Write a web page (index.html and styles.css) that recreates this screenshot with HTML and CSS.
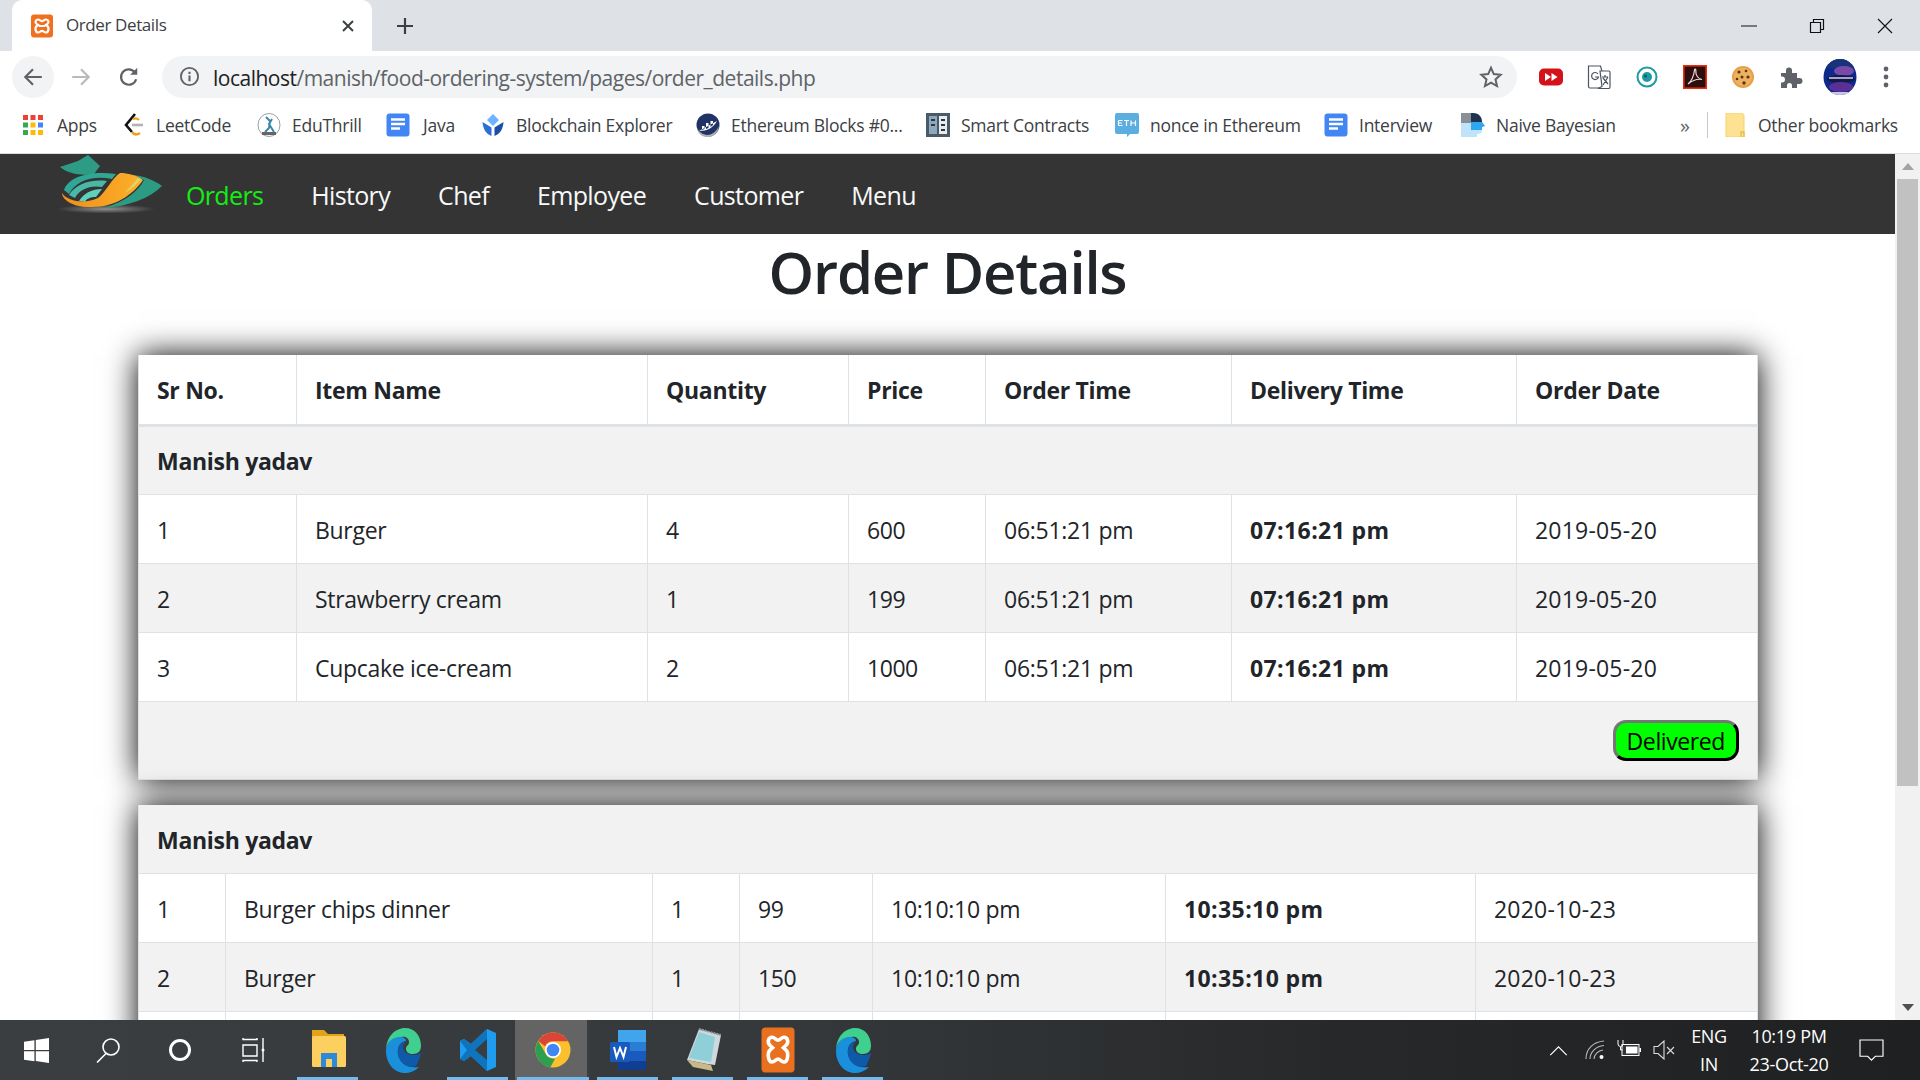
FILE: index.html
```html
<!DOCTYPE html>
<html lang="en">
<head>
<meta charset="utf-8">
<title>Order Details</title>
<link rel="stylesheet" href="styles.css">
</head>
<body>
<svg class="defs" width="0" height="0">
  <defs>
    <symbol id="xampp" viewBox="0 0 24 24">
      <rect x="1" y="0.5" width="22" height="23" rx="3" fill="#f0701f"/>
      <path d="M8 5.500c-2.600 0-3.400 3.200-1.200 4.600l1.600 1-1.600.9C4.600 13.400 5.400 18.500 8 18.500c1.800 0 2.600-1.600 4-1.600s2.200 1.600 4 1.600c2.600 0 3.400-5.100 1.200-6.500l-1.600-.9 1.600-1c2.200-1.400 1.400-4.600-1.200-4.600-1.800 0-2.600 1.600-4 1.600S9.800 5.500 8 5.500z" fill="none" stroke="#fff" stroke-width="2.200"/>
      <path d="M9 12h6" stroke="#fff" stroke-width="2"/>
    </symbol>
    <symbol id="doc" viewBox="0 0 24 24">
      <rect x="0.500" y="0.500" width="23" height="23" rx="3" fill="#4285f4"/>
      <path d="M5 6.500h14M5 11h14M5 15.500h9" stroke="#fff" stroke-width="2.600"/>
    </symbol>
    <symbol id="edge" viewBox="0 0 36 46">
      <path d="M1 24C1 10 10 1 20 1c10 0 16 8 16 18 0 5-3 8-8 8-4 0-7-2-7-5 0-4 3-3 3-7 0-4-4-6-8-5C8 11 1 15 1 24z" fill="#3fcf8e"/>
      <path d="M1 24C1 15 8 10 15 10c3 0 6 1 6 4-6 1-9 6-8 13 1 8 9 15 21 13-4 4-9 6-14 6C9 46 1 36 1 24z" fill="#1a8fdc"/>
      <path d="M13 27c-1-6 2-11 8-13-1 2-3 3-3 6 0 5 5 8 11 8 3 0 5-1 7-2-1 5-3 9-5 13-10 3-17-4-18-12z" fill="#0f5aa8"/>
    </symbol>
  </defs>
</svg>

<div class="tabstrip">
  <div class="tab">
    <svg class="tab-icon"><use href="#xampp"/></svg>
    <span class="tab-title">Order Details</span>
    <svg class="tab-close" viewBox="0 0 14 14"><path d="M2 2l10 10M12 2L2 12" stroke="#3c4043" stroke-width="2"/></svg>
  </div>
  <svg class="tab-new" viewBox="0 0 18 18"><path d="M9 1v16M1 9h16" stroke="#3c4043" stroke-width="2.200"/></svg>
  <div class="winbtns">
    <svg class="winbtn" viewBox="0 0 16 16"><path d="M0 8h16" stroke="#111" stroke-width="1"/></svg>
    <svg class="winbtn" viewBox="0 0 16 16"><path d="M1.500 4.500h10v10h-10zM4.500 4.500v-3h10v10h-3" fill="none" stroke="#111" stroke-width="1.200"/></svg>
    <svg class="winbtn" viewBox="0 0 16 16"><path d="M1 1l14 14M15 1L1 15" stroke="#111" stroke-width="1.100"/></svg>
  </div>
</div>

<div class="toolbar">
  <div class="navbtn navbtn-hover">
    <svg viewBox="0 0 20 20" class="ic20"><path d="M18 10H3M10 3l-7 7 7 7" fill="none" stroke="#5f6368" stroke-width="2"/></svg>
  </div>
  <div class="navbtn">
    <svg viewBox="0 0 20 20" class="ic20"><path d="M2 10h15M10 3l7 7-7 7" fill="none" stroke="#b8babd" stroke-width="2"/></svg>
  </div>
  <div class="navbtn">
    <svg viewBox="0 0 20 20" class="ic20"><path d="M16.500 12a7 7 0 1 1-1.200-6.300" fill="none" stroke="#5f6368" stroke-width="2"/><path d="M17.500 1.500v6.500h-6.500z" fill="#5f6368"/></svg>
  </div>
  <div class="omnibox">
    <svg viewBox="0 0 20 20" class="ic-info"><circle cx="10" cy="10" r="8.200" fill="none" stroke="#5f6368" stroke-width="1.800"/><path d="M10 9v5.500M10 5.500v2" stroke="#5f6368" stroke-width="2"/></svg>
    <span class="url"><span class="url-host">localhost</span>/manish/food-ordering-system/pages/order_details.php</span>
    <svg viewBox="0 0 24 24" class="ic-star"><path d="M12 2.800l2.800 6.300 6.800.7-5.100 4.600 1.500 6.700-6-3.500-6 3.500 1.500-6.700L2.400 9.800l6.800-.7z" fill="none" stroke="#5f6368" stroke-width="2"/></svg>
  </div>
  <div class="exts">
    <svg class="ext" viewBox="0 0 24 24"><rect y="3.500" width="24" height="17" rx="5" fill="#d3121a"/><path d="M6 8l6 4-6 4zM12.500 8l6 4-6 4z" fill="#fff"/></svg>
    <svg class="ext" viewBox="0 0 24 24"><path d="M1.500 1h12l6 21-4 1H3a1.500 1.500 0 0 1-1.500-1.500z" fill="#fff" stroke="#4a5560" stroke-width="1.200"/><path d="M13 6h9a1.500 1.500 0 0 1 1 1.500V22a1.500 1.500 0 0 1-1.500 1.500H11l4-2z" fill="#fff" stroke="#4a5560" stroke-width="1.200"/><path d="M11 9a3.500 3.500 0 1 0 .5 3H8M15 12h6M18 10v2M16 20l5-8M16 13l5 6" fill="none" stroke="#4a5560" stroke-width="1.200"/></svg>
    <svg class="ext" viewBox="0 0 24 24"><circle cx="12" cy="12" r="9.500" fill="#fff" stroke="#1d9aa6" stroke-width="2"/><circle cx="12" cy="12" r="5" fill="#1d9aa6"/><circle cx="10.500" cy="11" r="1.500" fill="#0b5a66"/></svg>
    <svg class="ext" viewBox="0 0 24 24"><rect x="0.800" y="0.800" width="22.400" height="22.400" fill="#2c0e0e" stroke="#e8300f" stroke-width="1.600"/><path d="M5 19c3-2 6-8 6.500-14 .2-1.500 1.500-1 1.300.5C12.500 10 15 14 19 14.500c-4-.8-9 .5-14 4.500z" fill="none" stroke="#e8d8d8" stroke-width="1.200"/></svg>
    <svg class="ext" viewBox="0 0 24 24"><circle cx="12" cy="12" r="11" fill="#e8a046"/><circle cx="12" cy="12" r="9" fill="#edb25f"/><g fill="#5e3410"><circle cx="8" cy="7" r="1.600"/><circle cx="15" cy="6" r="1.300"/><circle cx="17" cy="12" r="1.600"/><circle cx="11" cy="12" r="1.500"/><circle cx="6" cy="14" r="1.300"/><circle cx="13" cy="18" r="1.700"/></g></svg>
    <svg class="ext" viewBox="0 0 24 24"><path d="M2 8h5V5.500a3 3 0 0 1 6 0V8h5v5h2.500a3 3 0 0 1 0 6H18v4H13v-2.500a2.500 2.500 0 0 0-5 0V23H2v-5.500h1a3 3 0 0 0 0-6H2z" fill="#5f6368"/></svg>
    <svg class="avatar" viewBox="0 0 34 36"><defs><clipPath id="av"><ellipse cx="17" cy="18" rx="16.500" ry="18"/></clipPath></defs><g clip-path="url(#av)"><rect width="34" height="36" fill="#0d2a8a"/><rect y="0" width="34" height="9" fill="#17337a"/><ellipse cx="21" cy="12" rx="10" ry="5" fill="#7a4aa8"/><ellipse cx="18" cy="20" rx="14" ry="4" fill="#111a4a"/><path d="M6 19h24" stroke="#d8d0f0" stroke-width="1.500"/><ellipse cx="18" cy="28" rx="12" ry="5" fill="#5a2f96"/><rect y="33" width="34" height="4" fill="#c9c6e8"/></g></svg>
    <svg class="ext-menu" viewBox="0 0 6 24"><circle cx="3" cy="4" r="2.400" fill="#5f6368"/><circle cx="3" cy="12" r="2.400" fill="#5f6368"/><circle cx="3" cy="20" r="2.400" fill="#5f6368"/></svg>
  </div>
</div>

<div class="bookmarks">
  <div class="bm"><svg class="bm-apps" viewBox="0 0 20 20"><g><rect width="5" height="5" fill="#ea4335"/><rect x="7.500" width="5" height="5" fill="#ea4335"/><rect x="15" width="5" height="5" fill="#ea4335"/><rect y="7.500" width="5" height="5" fill="#34a853"/><rect x="7.500" y="7.500" width="5" height="5" fill="#fbbc05"/><rect x="15" y="7.500" width="5" height="5" fill="#4285f4"/><rect y="15" width="5" height="5" fill="#34a853"/><rect x="7.500" y="15" width="5" height="5" fill="#fbbc05"/><rect x="15" y="15" width="5" height="5" fill="#fbbc05"/></g></svg><span>Apps</span></div>
  <div class="bm"><svg class="bm-ic" viewBox="0 0 24 24"><path d="M14 1L5 12l6 7" fill="none" stroke="#111" stroke-width="2.600"/><path d="M11 12h11" stroke="#b3b3b3" stroke-width="2.600"/><path d="M11 19c2 3 5 3 8 1" fill="none" stroke="#f0a020" stroke-width="2.600"/><path d="M12 6c2-1 4-1 6 1" fill="none" stroke="#f0a020" stroke-width="2"/></svg><span>LeetCode</span></div>
  <div class="bm"><svg class="bm-ic" viewBox="0 0 24 24"><ellipse cx="12" cy="12" rx="11" ry="11.500" fill="#fff" stroke="#9aa0a5"/><path d="M9 4l4 4-1 7-4 4M15 6l-3 5 5 8" fill="none" stroke="#3a87a8" stroke-width="2"/><rect x="5" y="19" width="14" height="3" fill="#666"/></svg><span>EduThrill</span></div>
  <div class="bm"><svg class="bm-ic"><use href="#doc"/></svg><span class="bm-wide">Java</span></div>
  <div class="bm"><svg class="bm-ic" viewBox="0 0 24 24"><path d="M12 1l6 6-6 6-6-6z" fill="#6db3ff"/><path d="M1.500 9l9 5.500V23C5 21 2 16 1.500 9z" fill="#2a6fd6"/><path d="M22.500 9l-9 5.500V23c5.500-2 8.500-7 9-14z" fill="#1a4fa8"/></svg><span>Blockchain Explorer</span></div>
  <div class="bm"><svg class="bm-ic" viewBox="0 0 24 24"><circle cx="12" cy="12" r="11.500" fill="#1f3366"/><path d="M1 15c3 7 15 12 22-2-2 11-9 11-12 11C5 24 1 19 1 15z" fill="#b0b0b0"/><path d="M6 17v-4h2.500v3zM10 16v-6h2.500v5zM14.500 14V8H17v4zM3 18c8 0 14-3 18-10" fill="#fff"/></svg><span>Ethereum Blocks #0...</span></div>
  <div class="bm"><svg class="bm-ic" viewBox="0 0 24 24"><rect width="24" height="24" fill="#4a5a66"/><rect x="3" y="3" width="8" height="18" fill="#8fa8bc"/><rect x="13" y="3" width="8" height="18" fill="#e8ecef"/><path d="M5 7h4M5 12h4M15 7h4M15 12h4M15 17h4" stroke="#2b3640" stroke-width="2"/></svg><span>Smart Contracts</span></div>
  <div class="bm"><svg class="bm-ic" viewBox="0 0 24 24"><path d="M2 0h20a2 2 0 0 1 2 2v17a2 2 0 0 1-2 2h-7l-3 3v-3H2a2 2 0 0 1-2-2V2a2 2 0 0 1 2-2z" fill="#5aaee0"/><path d="M3.500 7.500h4M3.500 10h3.500M3.500 12.500h4M3.500 7.500v5M9 7.500h5M11.500 7.500v5.500M16 7.500v5.500M20.500 7.500v5.500M16 10h4.500" stroke="#fff" stroke-width="1.200" fill="none"/></svg><span>nonce in Ethereum</span></div>
  <div class="bm"><svg class="bm-ic"><use href="#doc"/></svg><span>Interview</span></div>
  <div class="bm"><svg class="bm-ic" viewBox="0 0 24 24"><path d="M0 0h12c6 0 9 4 9 9l3 4-3 1v4c0 2-2 3-5 3v3H0z" fill="#bfe3fb"/><path d="M0 0h10v10H0z" fill="#8a8f96"/><path d="M10 0h2c6 0 9 4 9 9H10z" fill="#20324f"/><path d="M10 9h11l3 4-3 1v3H10z" fill="#2ea7f0"/></svg><span>Naive Bayesian</span></div>
  <div class="bm-more">»</div>
  <div class="bm-sep"></div>
  <div class="bm"><svg class="bm-ic" viewBox="0 0 24 24"><path d="M3 0h16l2 2v22H3z" fill="#fde293"/><path d="M3 0h16l2 2v22H3z" fill="none" stroke="#f3d36a"/><path d="M18 24v-5h3v5" fill="none" stroke="#e6bf45" stroke-width="1.400"/></svg><span>Other bookmarks</span></div>
</div>

<div class="viewport">
  <div class="page">
    <nav class="navbar">
      <svg class="logo" viewBox="0 0 112 66">
        <defs>
          <linearGradient id="lg-o" x1="0" x2="1"><stop offset="0" stop-color="#ee8f1a"/><stop offset="1" stop-color="#fdb02a"/></linearGradient>
          <radialGradient id="lg-s"><stop offset="0" stop-color="#8e8e8e"/><stop offset="1" stop-color="#343434"/></radialGradient>
        </defs>
        <ellipse cx="52" cy="55" rx="49" ry="4.500" fill="url(#lg-s)"/>
        <path d="M6 13L24 7 34 1l12 11-6 8C28 22 14 20 6 13z" fill="#2e9c85"/>
        <path d="M10 36C14 23 36 16 62 20l-4 5C40 21 22 26 15 40z" fill="#2fa795"/>
        <path d="M15 41C22 30 36 25 53 27l-5 6C36 31 26 35 21 44z" fill="#49b8a6"/>
        <path d="M25 47C30 39 38 35 48 35l-6 8c-6 0-10 2-11 5z" fill="#5fd0bc"/>
        <path d="M78 21c12 1 22 5 30 11C96 44 76 52 50 54c20-6 34-16 40-28z" fill="#2c9b83"/>
        <path d="M8 39c0 7 12 15 30 14 22 0 40-11 51-27-7-5-15-7-23-7-8 5-14 19-22 25C32 50 14 48 8 39z" fill="url(#lg-o)"/>
        <path d="M84 24c-5 6-9 11-14 15 6-3 12-8 17-14z" fill="#d8d870"/>
      </svg>
      <a class="navlink active">Orders</a>
      <a class="navlink">History</a>
      <a class="navlink">Chef</a>
      <a class="navlink">Employee</a>
      <a class="navlink">Customer</a>
      <a class="navlink">Menu</a>
    </nav>
    <h1 class="title">Order Details</h1>
    <div class="tables">
      <table class="orders orders-a">
        <colgroup><col class="a1"><col class="a2"><col class="a3"><col class="a4"><col class="a5"><col class="a6"><col class="a7"></colgroup>
        <thead>
          <tr><th>Sr No.</th><th>Item Name</th><th>Quantity</th><th>Price</th><th>Order Time</th><th>Delivery Time</th><th>Order Date</th></tr>
        </thead>
        <tbody>
          <tr class="stripe name-row"><th colspan="7">Manish yadav</th></tr>
          <tr><td>1</td><td>Burger</td><td>4</td><td>600</td><td>06:51:21 pm</td><td class="strong">07:16:21 pm</td><td>2019-05-20</td></tr>
          <tr class="stripe"><td>2</td><td>Strawberry cream</td><td>1</td><td>199</td><td>06:51:21 pm</td><td class="strong">07:16:21 pm</td><td>2019-05-20</td></tr>
          <tr><td>3</td><td>Cupcake ice-cream</td><td>2</td><td>1000</td><td>06:51:21 pm</td><td class="strong">07:16:21 pm</td><td>2019-05-20</td></tr>
          <tr class="stripe status-row"><td colspan="7"><span class="status">Delivered</span></td></tr>
        </tbody>
      </table>
      <table class="orders orders-b">
        <colgroup><col class="b1"><col class="b2"><col class="b3"><col class="b4"><col class="b5"><col class="b6"><col class="b7"></colgroup>
        <tbody>
          <tr class="stripe name-row"><th colspan="7">Manish yadav</th></tr>
          <tr><td>1</td><td>Burger chips dinner</td><td>1</td><td>99</td><td>10:10:10 pm</td><td class="strong">10:35:10 pm</td><td>2020-10-23</td></tr>
          <tr class="stripe"><td>2</td><td>Burger</td><td>1</td><td>150</td><td>10:10:10 pm</td><td class="strong">10:35:10 pm</td><td>2020-10-23</td></tr>
          <tr><td></td><td></td><td></td><td></td><td></td><td></td><td></td></tr>
        </tbody>
      </table>
    </div>
  </div>
  <div class="scrollbar">
    <div class="sb-arrow sb-up"></div>
    <div class="sb-thumb"></div>
    <div class="sb-track"></div>
    <div class="sb-arrow sb-down"></div>
  </div>
</div>

<footer class="taskbar">
  <div class="tb-slot tb-sys"><svg class="tb-win" viewBox="0 0 24 24"><path d="M0 3.500l10-1.400V11.500H0zM11.300 2L24 0v11.500H11.300zM0 12.800h10v9.500L0 20.800zM11.300 12.800H24V24l-12.700-1.900z" fill="#fff"/></svg></div>
  <div class="tb-slot tb-sys"><svg class="tb-ic" viewBox="0 0 26 26"><circle cx="16" cy="10" r="8" fill="none" stroke="#fff" stroke-width="1.600"/><path d="M11 16.500L2 25.500" stroke="#fff" stroke-width="1.600"/></svg></div>
  <div class="tb-slot tb-sys"><svg class="tb-ic" viewBox="0 0 26 26"><circle cx="13" cy="13" r="9.500" fill="none" stroke="#fff" stroke-width="3"/></svg></div>
  <div class="tb-slot tb-sys tb-sys-last"><svg class="tb-ic" viewBox="0 0 26 26"><path d="M3 1v1.500h14V1M3 8h14v11H3zM3 25v-1.500h14V25M23 1v24" fill="none" stroke="#fff" stroke-width="1.400"/><circle cx="23" cy="13" r="1.500" fill="#fff"/></svg></div>
  <div class="tb-slot tb-open"><svg class="tb-app tb-up" viewBox="0 0 36 44"><path d="M2 5h12l4 4h16v4H2z" fill="#e0a418"/><rect x="2" y="11" width="34" height="31" rx="1.500" fill="#fcd05e"/><path d="M11 28h16v14h-5v-8h-6v8h-5z" fill="#2c8ad8"/></svg></div>
  <div class="tb-slot"><svg class="tb-app" viewBox="0 0 36 46"><use href="#edge"/></svg></div>
  <div class="tb-slot tb-open"><svg class="tb-app" viewBox="0 0 36 46"><path d="M27 2l9 4v34l-9 4-16-15-7 5-4-2V14l4-2 7 5z" fill="#1f9cf0"/><path d="M27 2l-16 15-7-5-4 2 7 9-7 9 4 2 7-5 16 15z" fill="#0d74bd"/><path d="M27 12L15 23l12 10z" fill="#3a3d3f"/></svg></div>
  <div class="tb-slot tb-open tb-active"><svg class="tb-chrome" viewBox="0 0 36 36"><circle cx="18" cy="18" r="17.500" fill="#fbc02d"/><path d="M18 .5a17.500 17.500 0 0 1 15.200 8.800H18a8.800 8.800 0 0 0-8 5L3.200 9A17.500 17.500 0 0 1 18 .5z" fill="#db4437"/><path d="M3.200 9l7 12a8.800 8.800 0 0 0 10 5.500l-5 9A17.500 17.500 0 0 1 3.200 9z" fill="#2e9e4f"/><circle cx="18" cy="18" r="8" fill="#fff"/><circle cx="18" cy="18" r="6.300" fill="#4285f4"/></svg></div>
  <div class="tb-slot tb-open"><svg class="tb-app" viewBox="0 0 36 44"><rect x="8" y="2" width="28" height="40" rx="1" fill="#2b7cd3"/><rect x="8" y="2" width="28" height="12" fill="#41a5ee"/><rect x="8" y="23" width="28" height="10" fill="#185abd"/><rect x="8" y="33" width="28" height="9" fill="#103f91"/><rect x="0" y="14" width="20" height="20" rx="1.500" fill="#185abd"/><path d="M4 19l2.500 10 3.500-9 3.500 9L16 19" fill="none" stroke="#fff" stroke-width="2"/></svg></div>
  <div class="tb-slot tb-open"><svg class="tb-app" viewBox="0 0 36 44"><path d="M14 1l22 6-6 30-8-1L2 32z" fill="#cfd8dc"/><path d="M14 4l16 5-4 25L4 30z" fill="#8fd0d8"/><path d="M2 32l24 5 2 6-20-4z" fill="#c9b98a"/><path d="M14 1l22 6" stroke="#8a9a9f" stroke-width="2" stroke-dasharray="2 1"/></svg></div>
  <div class="tb-slot tb-open"><svg class="tb-app" viewBox="0 0 24 30"><rect x="1" y="0" width="22" height="30" rx="2.500" fill="#e9701e"/><path d="M8 6.500c-2.600 0-3.400 3.800-1.200 5.500l1.600 1.500-1.600 1.500C4.600 16.700 5.400 23 8 23c1.800 0 2.600-2 4-2s2.200 2 4 2c2.600 0 3.400-6.300 1.200-8l-1.600-1.500 1.600-1.500c2.200-1.700 1.400-5.500-1.200-5.500-1.800 0-2.600 2-4 2S9.800 6.500 8 6.500z" fill="none" stroke="#fff" stroke-width="2.400"/></svg></div>
  <div class="tb-slot tb-open"><svg class="tb-app" viewBox="0 0 36 46"><use href="#edge"/></svg></div>
  <div class="tray">
    <svg class="tray-ic tray-chev" viewBox="0 0 20 12"><path d="M1 11l9-9 9 9" fill="none" stroke="#fff" stroke-width="1.300"/></svg>
    <svg class="tray-ic tray-wifi" viewBox="0 0 20 20"><path d="M1 19C1 9 8 2 19 1M5 19c0-7 6-13 14-13.500M9 19c0-4 4-8.500 9-9" fill="none" stroke="#bbb" stroke-width="1.100"/><circle cx="16.500" cy="17" r="2" fill="#fff"/></svg>
    <svg class="tray-ic tray-batt" viewBox="0 0 24 18"><rect x="5" y="5.500" width="17" height="11" fill="#333" stroke="#fff" stroke-width="1"/><rect x="9" y="7.500" width="11.500" height="7" fill="#fff"/><rect x="22.500" y="9" width="1.500" height="4" fill="#fff"/><path d="M1 1v4a2.500 2.500 0 0 0 5 0V1M3.500 8v3h2" fill="none" stroke="#fff" stroke-width="1"/></svg>
    <svg class="tray-ic tray-vol" viewBox="0 0 22 20"><path d="M1 6.500h4L11 1v18l-6-5.500H1z" fill="none" stroke="#ddd" stroke-width="1.100"/><path d="M14 7l7 7M21 7l-7 7" stroke="#ddd" stroke-width="1.100"/></svg>
    <div class="tray-text tray-lang"><span>ENG</span><span>IN</span></div>
    <div class="tray-text tray-clock"><span>10:19 PM</span><span>23-Oct-20</span></div>
    <svg class="tray-ic tray-note" viewBox="0 0 26 24"><path d="M1 1h24v17h-8l-4 4-4-4H1z" fill="none" stroke="#fff" stroke-width="1.200"/></svg>
  </div>
</footer>
</body>
</html>
```
FILE: styles.css
```css
* { box-sizing: border-box; }
html, body { margin: 0; height: 100%; overflow: hidden; }
body {
  display: flex;
  flex-direction: column;
  height: 1080px;
  font-family: "Open Sans", "Noto Sans", "Liberation Sans", sans-serif;
  color: #212529;
  background: #fff;
}
.defs { position: absolute; }

/* Browser tab strip */
.tabstrip { height: 51px; flex: none; background: #dee1e6; display: flex; align-items: center; padding-left: 12px; }
.tab { width: 360px; height: 51px; background: #fff; border-radius: 10px 10px 0 0; display: flex; align-items: center; padding: 0 17px 0 18px; }
.tab-icon { width: 24px; height: 24px; flex: none; }
.tab-title { margin: -2px 0 0 12px; font-size: 17px; letter-spacing: -0.400px; color: #3c4043; flex: 1; }
.tab-close { width: 14px; height: 14px; flex: none; }
.tab-new { width: 18px; height: 18px; margin-left: 24px; flex: none; }
.winbtns { margin-left: auto; display: flex; }
.winbtn { width: 16px; height: 16px; margin-right: 52px; }
.winbtn:last-child { margin-right: 27px; }

/* Toolbar */
.toolbar { height: 51px; flex: none; display: flex; align-items: center; padding-left: 12px; background: #fff; }
.navbtn { width: 42px; height: 42px; border-radius: 50%; display: flex; align-items: center; justify-content: center; margin-right: 6px; flex: none; }
.navbtn-hover { background: #f1f3f4; }
.ic20 { width: 22px; height: 22px; }
.omnibox { margin-left: 6px; width: 1355px; height: 42px; border-radius: 21px; background: #f1f3f4; display: flex; align-items: center; padding: 0 14px 0 17px; flex: none; }
.ic-info { width: 21px; height: 21px; flex: none; }
.url { margin: 2px 0 0 13px; flex: 1; font-size: 21px; letter-spacing: -0.500px; color: #5f6368; white-space: nowrap; }
.url-host { color: #202124; }
.ic-star { width: 24px; height: 24px; flex: none; }
.exts { flex: 1; display: flex; align-items: center; padding-left: 22px; }
.ext { width: 24px; height: 24px; margin-right: 24px; flex: none; }
.avatar { width: 34px; height: 36px; margin-left: -4px; margin-right: 26px; flex: none; }
.ext-menu { width: 6px; height: 24px; flex: none; }

/* Bookmarks */
.bookmarks {
  height: 52px; flex: none; border-bottom: 1px solid #dadce0; background: #fff;
  display: grid;
  grid-template-columns: 100px 136px 129px 95px 215px 230px 189px 209px 137px 212px 34px 16px auto;
  align-items: center;
  padding: 0 0 5px 21px;
  font-size: 17.500px;
  color: #3c4043;
}
.bm { display: flex; align-items: center; white-space: nowrap; letter-spacing: -0.250px; }
.bm span { margin-left: 11px; }
.bm .bm-wide { margin-left: 13px; }
.bm-ic { width: 24px; height: 24px; flex: none; }
.bm-apps { width: 20px; height: 20px; margin: 0 3px 0 2px; flex: none; }
.bm-more { font-size: 20px; color: #5f6368; text-align: left; padding-left: 7px; }
.bm-sep { width: 1px; height: 26px; background: #c8c8c8; }

/* Page viewport */
.viewport { height: 866px; flex: none; display: flex; }
.page { width: 1895px; height: 866px; overflow: hidden; flex: none; }
.navbar { height: 80px; background: #343434; display: flex; align-items: flex-start; padding: 0 0 0 54px; }
.logo { width: 112px; height: 66px; flex: none; margin-right: 20px; }
.navlink { font-size: 25px; line-height: 80px; letter-spacing: -0.650px; color: #f8f9fa; margin-right: 48px; margin-top: 1px; }
.navlink.active { color: #14ee14; }
.title { margin: 0; font-size: 58px; font-weight: 600; text-align: center; line-height: 76px; height: 121px; letter-spacing: -1.200px; }
.tables { padding: 0 138px; display: flex; flex-direction: column; gap: 25px; }

/* Tables */
.orders { width: 1619px; table-layout: fixed; border-collapse: collapse; background: #fff; box-shadow: 0 0 30px #000; font-size: 23px; letter-spacing: -0.450px; }
.orders th, .orders td { border: 1px solid #dee2e6; padding: 2px 18px 0 18px; height: 69px; text-align: left; vertical-align: middle; }
.orders thead th { height: 70px; border-bottom: 3px solid #dee2e6; font-weight: 700; letter-spacing: -0.300px; }
.orders tr:first-child > * { border-top: 0; }
.orders > tbody > tr.stripe { background: #f2f2f2; }
.name-row th { font-weight: 700; letter-spacing: -0.300px; }
.orders td:nth-child(2) { letter-spacing: -0.300px; }
.orders td:nth-child(5) { letter-spacing: -0.270px; }
.orders td:nth-child(6) { font-weight: 700; letter-spacing: 0.400px; }
.orders td:nth-child(7) { letter-spacing: 0.200px; }
.orders .status-row td:first-child { height: 78px; padding-top: 0; text-align: right; letter-spacing: 0; }
.status { display: inline-block; height: 41px; line-height: 37px; padding: 0 11px; background: #0f0; color: #000; border: 3px outset #222; border-radius: 13px; font-size: 23px; letter-spacing: -0.400px; }
.a1 { width: 158px; } .a2 { width: 351px; } .a3 { width: 201px; } .a4 { width: 137px; } .a5 { width: 246px; } .a6 { width: 285px; } .a7 { width: 241px; }
.b1 { width: 87px; } .b2 { width: 427px; } .b3 { width: 87px; } .b4 { width: 133px; } .b5 { width: 293px; } .b6 { width: 310px; } .b7 { width: 282px; }

/* Scrollbar */
.scrollbar { width: 25px; flex: none; background: #f1f1f1; display: flex; flex-direction: column; align-items: center; }
.sb-arrow { width: 0; height: 0; flex: none; border-left: 6px solid transparent; border-right: 6px solid transparent; }
.sb-up { border-bottom: 7px solid #a3a3a3; margin: 9px 0 9px; }
.sb-down { border-top: 7px solid #505050; margin: 9px 0 9px; }
.sb-thumb { width: 21px; height: 607px; background: #c1c1c1; flex: none; }
.sb-track { flex: 1; }

/* Windows taskbar */
.taskbar { height: 60px; flex: none; display: flex; align-items: stretch; background: linear-gradient(90deg, #3a3e40 0%, #36393b 40%, #26282a 70%, #1f2022 100%); color: #fff; }
.tb-slot { width: 75px; flex: none; display: flex; align-items: center; justify-content: center; position: relative; }
.tb-sys { width: 72px; }
.tb-sys-last { width: 74px; }
.tb-open::after { content: ""; position: absolute; left: 7px; right: 7px; bottom: 0; height: 3px; background: #76b9ed; }
.tb-active { background: #646464; box-shadow: inset -10px 0 0 -7px #3a3d3f; }
.tb-active::after { left: 2px; right: 1px; }
.tb-win { width: 25px; height: 25px; }
.tb-ic { width: 26px; height: 26px; }
.tb-app { width: 36px; height: 46px; }
.tb-up { margin-top: -6px; }
.tb-chrome { width: 36px; height: 36px; }
.tray { flex: 1; display: flex; align-items: center; justify-content: flex-end; color: #fff; }
.tray-ic { flex: none; }
.tray-chev { width: 19px; height: 11px; }
.tray-wifi { width: 20px; height: 20px; margin-left: 17px; }
.tray-batt { width: 24px; height: 18px; margin-left: 12px; margin-top: -4px; }
.tray-vol { width: 22px; height: 20px; margin-left: 12px; }
.tray-text { display: flex; flex-direction: column; align-items: center; font-size: 18px; line-height: 28px; letter-spacing: -0.300px; white-space: nowrap; }
.tray-lang { margin-left: 14px; width: 40px; }
.tray-clock { margin-left: 15px; width: 90px; }
.tray-note { width: 25px; height: 23px; margin-left: 25px; margin-right: 36px; }
```
